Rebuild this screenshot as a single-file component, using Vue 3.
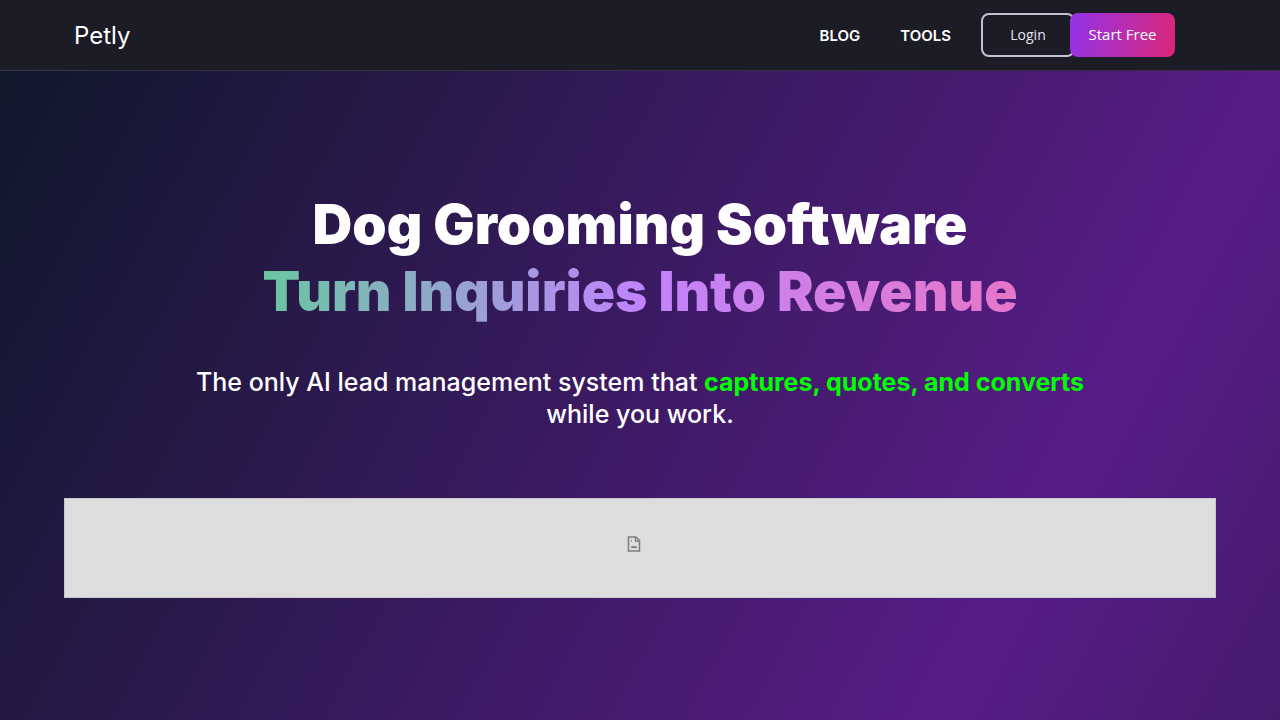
<script setup>
import { ref } from 'vue'

const links = ref([
  { label: 'BLOG', href: '#blog' },
  { label: 'TOOLS', href: '#tools' }
])
</script>

<template>
  <div class="page">
    <header class="header">
      <a class="header__logo" href="#">Petly</a>
      <nav class="nav">
        <a v-for="link in links" :key="link.label" class="nav__link" :href="link.href">
          {{ link.label }}
        </a>
        <div class="nav__actions">
          <a class="button button--outline" href="#login">Login</a>
          <a class="button button--primary" href="#start">Start Free</a>
        </div>
      </nav>
    </header>

    <main class="hero">
      <h1 class="hero__title">
        Dog Grooming Software
        <span class="hero__accent">Turn Inquiries Into Revenue</span>
      </h1>
      <p class="hero__text">
        The only AI lead management system that
        <strong>captures, quotes, and converts</strong>
        while you work.
      </p>
      <div class="hero__media">
        <svg width="14" height="16" viewBox="0 0 14 16" fill="none" stroke="#7d7d7d">
          <path d="M1.5 1h7.5l3.5 3.5v10.5h-11z" stroke-width="1.5" />
          <path d="M8.5 1v4h4" stroke-width="1.3" />
          <path d="M4.5 4v1.5M4 11.5c1.5-1.5 4.5-1.5 6 0z" stroke-width="1" />
        </svg>
      </div>
    </main>
  </div>
</template>

<style>
body {
  margin: 0;
  background: #0f172a;
}
</style>

<style scoped>
.page {
  min-height: 100vh;
  display: flex;
  flex-direction: column;
  font-family: Inter, "Liberation Sans", sans-serif;
  color: #fff;
}

a {
  color: inherit;
  text-decoration: none;
}

.header {
  display: flex;
  justify-content: space-between;
  align-items: center;
  height: 70px;
  padding: 0 105px 0 74px;
  background: #1c1c27;
  border-bottom: 1px solid #35323f;
}

.header__logo {
  font-size: 24px;
}

.nav {
  display: flex;
  align-items: center;
}

.nav__link {
  margin-right: 40px;
  font-size: 15px;
  font-weight: 600;
}

.nav__link:nth-of-type(2) {
  margin-right: 30px;
}

.nav__actions {
  display: flex;
}

.button {
  display: flex;
  align-items: center;
  justify-content: center;
  box-sizing: border-box;
  height: 44px;
  padding-bottom: 2px;
  border-radius: 8px;
  font-family: "Open Sans", sans-serif;
}

.button--outline {
  width: 94px;
  border: 2px solid #c3c3d3;
  font-size: 14px;
  color: #e5e5ef;
}

.button--primary {
  position: relative;
  width: 105px;
  margin-left: -5px;
  background: linear-gradient(100deg, #9333ea, #db2777);
  font-size: 15px;
}

.hero {
  flex: 1;
  padding: 120px 64px;
  background: linear-gradient(118deg, #0f172a 0%, #581c87 79%, #0f172a 158%);
  text-align: center;
}

.hero__title {
  max-width: 1024px;
  margin: 0 auto;
  font-size: 55px;
  line-height: 67px;
  font-weight: 900;
}

.hero__accent {
  display: block;
  background: linear-gradient(90deg, #4ade80, #c084fc, #f472b6);
  background-clip: text;
  -webkit-background-clip: text;
  color: transparent;
}

.hero__text {
  max-width: 896px;
  margin: 41px auto 68px;
  font-size: 25px;
  line-height: 32px;
  font-weight: 500;
}

.hero__text strong {
  font-weight: 700;
  color: #0f0;
}

.hero__media {
  display: flex;
  align-items: center;
  justify-content: center;
  box-sizing: border-box;
  height: 100px;
  padding: 0 12px 8px 0;
  background: #ddd;
  border: 1px solid #c9c8ce;
}
</style>
